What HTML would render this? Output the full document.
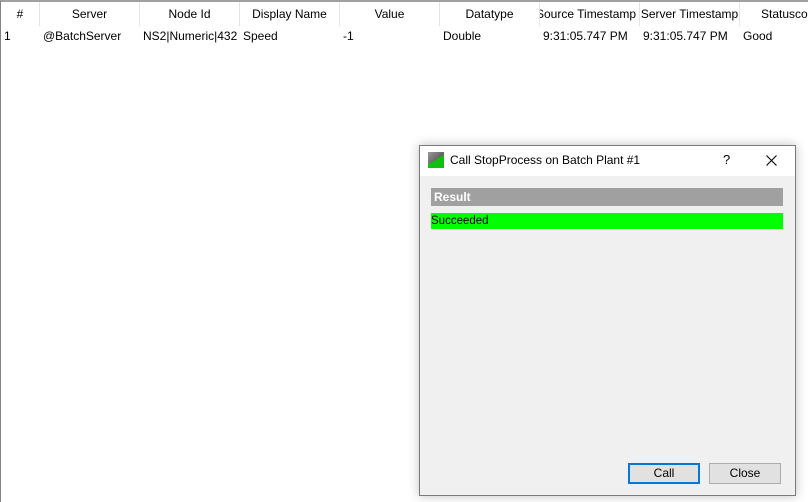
<!DOCTYPE html>
<html><head><meta charset="utf-8"><style>
*{margin:0;padding:0;box-sizing:border-box}
body{width:808px;height:502px;background:#fff;position:relative;overflow:hidden;font-family:"Liberation Sans",sans-serif;font-size:12px;color:#000}
.tb{position:absolute;left:0;top:0;width:808px;height:502px;border-left:1px solid #828282;border-top:2px solid #a0a0a0}
.h{position:absolute;top:2px;height:24px;line-height:24px;text-align:center;border-right:1px solid #e5e5e5;overflow:hidden;white-space:nowrap}
.c{position:absolute;top:28px;line-height:16px;white-space:nowrap;overflow:hidden}
.dlg{position:absolute;left:419px;top:145px;width:377px;height:351px;border:1px solid #7a7a7a;background:#f0f0f0;box-shadow:0 0 10px rgba(0,0,0,.25)}
.title{position:absolute;left:0;top:0;width:375px;height:30px;background:#fff}
.btn{position:absolute;top:317px;width:72px;height:21px;background:#e1e1e1;border:1px solid #adadad;text-align:center;line-height:19px}
</style></head><body>
<div class="tb"></div>
<div class="h" style="left:1px;width:39px">#</div>
<div class="h" style="left:40px;width:100px">Server</div>
<div class="h" style="left:140px;width:100px">Node Id</div>
<div class="h" style="left:240px;width:100px">Display Name</div>
<div class="h" style="left:340px;width:100px">Value</div>
<div class="h" style="left:440px;width:100px">Datatype</div>
<div class="h" style="left:540px;width:100px;text-align:left;text-indent:-4px">Source Timestamp</div>
<div class="h" style="left:640px;width:100px">Server Timestamp</div>
<div class="h" style="left:740px;width:68px;border:none;text-align:left;padding-left:21px">Statuscode</div>
<div class="c" style="left:4px">1</div>
<div class="c" style="left:43px">@BatchServer</div>
<div class="c" style="left:143px;width:96px">NS2|Numeric|432</div>
<div class="c" style="left:243px">Speed</div>
<div class="c" style="left:343px">-1</div>
<div class="c" style="left:443px">Double</div>
<div class="c" style="left:543px">9:31:05.747 PM</div>
<div class="c" style="left:643px">9:31:05.747 PM</div>
<div class="c" style="left:743px">Good</div>
<div class="dlg">
 <div class="title">
  <svg style="position:absolute;left:8px;top:6px" width="16" height="16" viewBox="0 0 16 16"><defs><linearGradient id="g" x1="0" y1="0" x2="1" y2="1"><stop offset="0" stop-color="#999"/><stop offset="1" stop-color="#333"/></linearGradient></defs><rect width="16" height="16" fill="url(#g)"/><path d="M0 16V12Q6 10 10 6L16 3V16Z" fill="#10c010"/></svg>
  <div style="position:absolute;left:30px;top:7px;font-size:12px">Call StopProcess on Batch Plant #1</div>
  <div style="position:absolute;left:303px;top:6px;font-size:13px">?</div>
  <svg style="position:absolute;left:346px;top:9px" width="11" height="11"><path d="M0.5 0.5L10.5 10.5M10.5 0.5L0.5 10.5" stroke="#000" stroke-width="1.1"/></svg>
 </div>
 <div style="position:absolute;left:11px;top:42px;width:352px;height:18px;background:#a0a0a0;color:#fff;font-weight:bold;line-height:18px;padding-left:3px">Result</div>
 <div style="position:absolute;left:11px;top:67px;width:352px;height:16px;background:#00ff00;line-height:16px;font-size:11.5px">Succeeded</div>
 <div class="btn" style="left:208px;border:2px solid #0078d7;line-height:17px">Call</div>
 <div class="btn" style="left:289px">Close</div>
</div>
</body></html>
